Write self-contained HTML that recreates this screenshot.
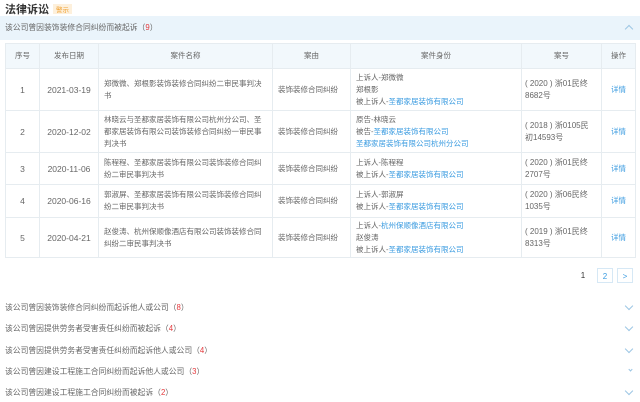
<!DOCTYPE html>
<html><head><meta charset="utf-8"><style>
*{margin:0;padding:0;box-sizing:border-box}
body{width:640px;height:402px;overflow:hidden;background:#fff;font-family:"Liberation Sans","Noto Sans CJK SC",sans-serif;font-size:7.5px;color:#666;position:relative}
.title{position:absolute;left:5px;top:1px;font-size:11px;font-weight:bold;color:#333}
.tag{display:inline-block;font-size:6.5px;font-weight:normal;color:#f0a030;background:#fdf0dc;padding:0 3px;margin-left:4px;vertical-align:1px}
.bar{position:absolute;left:0;top:16px;width:640px;height:24px;background:#eaf4fb;line-height:24px;padding-left:5px;color:#666;font-size:7.8px}
.red{color:#e4393c}
.chev{position:absolute;right:8px;width:6px;height:6px;border-right:1px solid #9cc6e4;border-bottom:1px solid #9cc6e4}
table{position:absolute;left:5px;top:43px;width:630px;border-collapse:collapse;table-layout:fixed}
td,th{border:1px solid #e6ecf0;font-weight:normal;line-height:12px;vertical-align:middle}
th{background:#f2f8fc;height:25px;text-align:center;color:#666}
td.c{text-align:center}
td.l{padding-left:5px;padding-right:3px}
td.nm{padding-right:9px}
.n{font-size:8.5px}
.k{font-size:8px;padding-left:3px!important;padding-right:1px!important}
a{color:#3a9be0;text-decoration:none}
.pg{position:absolute;top:268px;height:15px;line-height:15px;text-align:center;font-size:8px}
.box{border:1px solid #d6e8f5;width:16px;color:#3a9be0}
.item{position:absolute;left:5px;color:#666;font-size:7.8px}
</style></head><body>
<div class="title">法律诉讼<span class="tag">警示</span></div>
<div class="bar">该公司曾因装饰装修合同纠纷而被起诉（<span class="red">9</span>）<div class="chev" style="top:10px;transform:rotate(-135deg)"></div></div>
<table>
<colgroup><col style="width:34px"><col style="width:59px"><col style="width:174px"><col style="width:78px"><col style="width:171px"><col style="width:80px"><col style="width:34px"></colgroup>
<tr><th>序号</th><th>发布日期</th><th>案件名称</th><th>案由</th><th>案件身份</th><th>案号</th><th>操作</th></tr>
<tr style="height:42px"><td class="c n">1</td><td class="c n">2021-03-19</td><td class="l nm">郑微微、郑根影装饰装修合同纠纷二审民事判决书</td><td class="l">装饰装修合同纠纷</td><td class="l">上诉人-郑微微<br>郑根影<br>被上诉人-<a>圣都家居装饰有限公司</a></td><td class="l k">( 2020 ) 浙01民终<br>8682号</td><td class="c"><a>详情</a></td></tr>
<tr style="height:42px"><td class="c n">2</td><td class="c n">2020-12-02</td><td class="l nm">林晓云与圣都家居装饰有限公司杭州分公司、圣都家居装饰有限公司装饰装修合同纠纷一审民事判决书</td><td class="l">装饰装修合同纠纷</td><td class="l">原告-林晓云<br>被告-<a>圣都家居装饰有限公司</a><br><a>圣都家居装饰有限公司杭州分公司</a></td><td class="l k">( 2018 ) 浙0105民<br>初14593号</td><td class="c"><a>详情</a></td></tr>
<tr style="height:32px"><td class="c n">3</td><td class="c n">2020-11-06</td><td class="l nm">陈程程、圣都家居装饰有限公司装饰装修合同纠纷二审民事判决书</td><td class="l">装饰装修合同纠纷</td><td class="l">上诉人-陈程程<br>被上诉人-<a>圣都家居装饰有限公司</a></td><td class="l k">( 2020 ) 浙01民终<br>2707号</td><td class="c"><a>详情</a></td></tr>
<tr style="height:33px"><td class="c n">4</td><td class="c n">2020-06-16</td><td class="l nm">郭淑屏、圣都家居装饰有限公司装饰装修合同纠纷二审民事判决书</td><td class="l">装饰装修合同纠纷</td><td class="l">上诉人-郭淑屏<br>被上诉人-<a>圣都家居装饰有限公司</a></td><td class="l k">( 2020 ) 浙06民终<br>1035号</td><td class="c"><a>详情</a></td></tr>
<tr style="height:40px"><td class="c n">5</td><td class="c n">2020-04-21</td><td class="l nm">赵俊涛、杭州保顺像酒店有限公司装饰装修合同纠纷二审民事判决书</td><td class="l">装饰装修合同纠纷</td><td class="l">上诉人-<a>杭州保顺像酒店有限公司</a><br>赵俊涛<br>被上诉人-<a>圣都家居装饰有限公司</a></td><td class="l k">( 2019 ) 浙01民终<br>8313号</td><td class="c"><a>详情</a></td></tr>
</table>
<div class="pg" style="left:577px;width:12px;color:#333">1</div>
<div class="pg box" style="left:597px">2</div>
<div class="pg box" style="left:617px">&gt;</div>
<div class="item" style="top:302px">该公司曾因装饰装修合同纠纷而起诉他人或公司（<span class="red">8</span>）</div>
<div class="item" style="top:323px">该公司曾因提供劳务者受害责任纠纷而被起诉（<span class="red">4</span>）</div>
<div class="item" style="top:345px">该公司曾因提供劳务者受害责任纠纷而起诉他人或公司（<span class="red">4</span>）</div>
<div class="item" style="top:366px">该公司曾因建设工程施工合同纠纷而起诉他人或公司（<span class="red">3</span>）</div>
<div class="item" style="top:387px">该公司曾因建设工程施工合同纠纷而被起诉（<span class="red">2</span>）</div>
<div class="chev" style="top:303px;transform:rotate(45deg)"></div>
<div class="chev" style="top:324px;transform:rotate(45deg)"></div>
<div class="chev" style="top:346px;transform:rotate(45deg)"></div>
<div class="chev" style="top:368px;transform:rotate(45deg);width:3px;height:3px"></div>
<div class="chev" style="top:388px;transform:rotate(45deg)"></div>
</body></html>
